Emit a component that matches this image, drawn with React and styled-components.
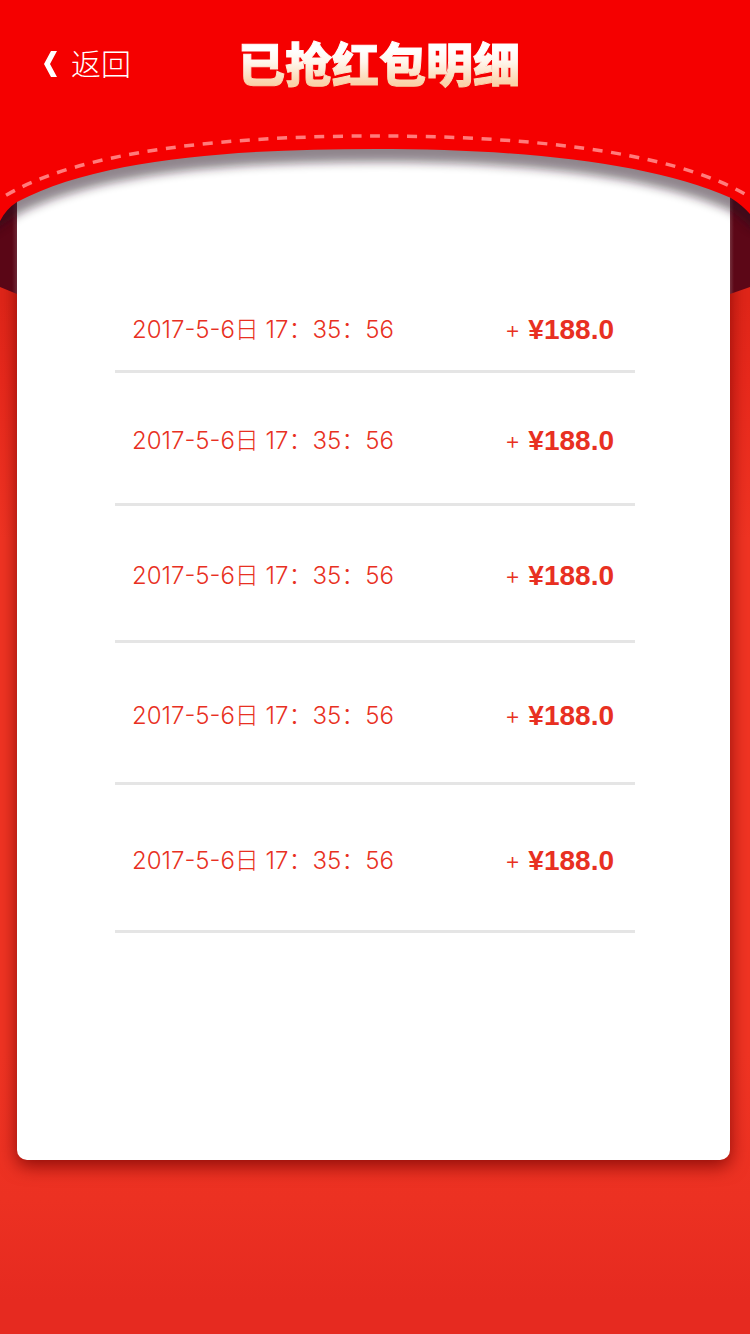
import React from 'react';
import styled, { createGlobalStyle } from 'styled-components';

const GlobalStyle = createGlobalStyle`
  * { box-sizing: border-box; }
  body {
    margin: 0;
    font-family: "Liberation Sans", "Noto Sans CJK SC", sans-serif;
  }
`;

const Page = styled.div`
  position: relative;
  min-height: 100vh;
  padding-bottom: 174px;
  background: linear-gradient(#e02619 300px, #e8291c 380px, #f03423 540px, #f03423 1050px, #ec3122 1200px, #e62a20 1300px);
`;

const Header = styled.header`
  position: relative;
  z-index: 2;
  display: grid;
  grid-template-columns: 1fr auto 1fr;
  align-items: center;
  height: 128px;
  padding: 0 36px 4px 44px;
`;

const BackButton = styled.button`
  display: flex;
  align-items: center;
  gap: 13px;
  justify-self: start;
  padding: 0;
  border: 0;
  background: none;
  color: #fff;
  font-family: "Noto Sans CJK SC", sans-serif;
  font-size: 30px;
  font-weight: 300;
  line-height: 40px;
  cursor: pointer;
`;

const Chevron = styled.svg`
  margin-top: 4px;
`;

const Title = styled.h1`
  margin: 0;
  font-family: "Noto Sans CJK SC", sans-serif;
  font-size: 47px;
  font-weight: 900;
  line-height: 56px;
  color: transparent;
  background: linear-gradient(#fff 16px, #fff6ec 28px, #fad2a8 50px);
  background-clip: text;
  -webkit-background-clip: text;
  -webkit-text-stroke: 1px transparent;
`;

const Flap = styled.svg`
  position: absolute;
  z-index: 1;
  top: 0;
  left: 0;
  width: 100%;
  height: 300px;
  pointer-events: none;
`;

const Card = styled.main`
  position: relative;
  min-height: 1030px;
  margin: 2px 20px 0 17px;
  padding: 154px 95px 40px 98px;
  background: #fff;
  border-radius: 0 0 10px 10px;
  box-shadow: 0 6px 18px rgba(110, 0, 0, 0.75);

  &::before,
  &::after {
    content: "";
    position: absolute;
    top: 0;
    height: 164px;
  }

  &::before {
    right: 100%;
    width: 17px;
    background: linear-gradient(90deg, #5a0616 70%, #6c2634);
    clip-path: polygon(0 0, 100% 0, 100% 100%, 0 157px);
  }

  &::after {
    left: 100%;
    width: 20px;
    background: linear-gradient(90deg, #74303c, #5c0717 20%);
    clip-path: polygon(0 0, 100% 0, 100% 157px, 0 100%);
  }
`;

const Records = styled.ul`
  margin: 0;
  padding: 0;
  list-style: none;
`;

const Row = styled.li`
  display: flex;
  align-items: center;
  justify-content: space-between;
  height: ${({ $height }) => $height}px;
  padding: 6px 21px 0 17px;
  border-bottom: 3px solid #e5e5e5;
  color: #e83022;
`;

const Time = styled.time`
  font-family: Inter, "Noto Sans CJK SC", sans-serif;
  font-size: 24px;
  font-weight: 300;
  line-height: 32px;
  white-space: nowrap;
`;

const Amount = styled.span`
  display: flex;
  align-items: center;
  gap: 8px;
  font-size: 28px;
  line-height: 32px;
`;

const Plus = styled.span`
  font-family: Inter, sans-serif;
  font-size: 24px;
  font-weight: 300;
`;

const records = [
  { height: 89 },
  { height: 133 },
  { height: 137 },
  { height: 142 },
  { height: 148 },
].map((r) => ({ ...r, time: '2017-5-6日 17：35：56', amount: '¥188.0' }));

const EDGE =
  'M0 0H750V214Q742 205 731 198C650 162 520 149 375 149C240 149 100 158 17 202Q6 209 0 221Z';

export default function App() {
  return (
    <Page lang="zh-CN">
      <GlobalStyle />
      <Flap viewBox="0 0 750 300" preserveAspectRatio="none" aria-hidden="true">
        <defs>
          <filter id="soft" x="-10%" y="-10%" width="120%" height="130%">
            <feGaussianBlur stdDeviation="5" />
          </filter>
        </defs>
        <path d="M-40 -20H790V230L750 214Q742 205 731 198C650 162 520 149 375 149C240 149 100 158 17 202L-40 240Z" transform="translate(0 13)" fill="#20101a" opacity="0.5" filter="url(#soft)" />
        <path d={EDGE} fill="#f50000" />
        <g fill="none" stroke="#ff7b7b" strokeWidth="3.5" strokeDasharray="10 8.6" strokeDashoffset="5">
          <path d="M375 136C240 136 80 148 0 199" />
          <path d="M375 136C510 136 670 148 750 197" />
        </g>
      </Flap>
      <Header>
        <BackButton type="button">
          <Chevron width="14" height="26" viewBox="0 0 14 26" aria-hidden="true">
            <path d="M7 0H13L6 13L13 26H7L0 13Z" fill="#fff" />
          </Chevron>
          返回
        </BackButton>
        <Title>已抢红包明细</Title>
      </Header>
      <Card>
        <Records>
          {records.map((r, i) => (
            <Row key={i} $height={r.height}>
              <Time>{r.time}</Time>
              <Amount>
                <Plus>+</Plus>
                <b>{r.amount}</b>
              </Amount>
            </Row>
          ))}
        </Records>
      </Card>
    </Page>
  );
}
